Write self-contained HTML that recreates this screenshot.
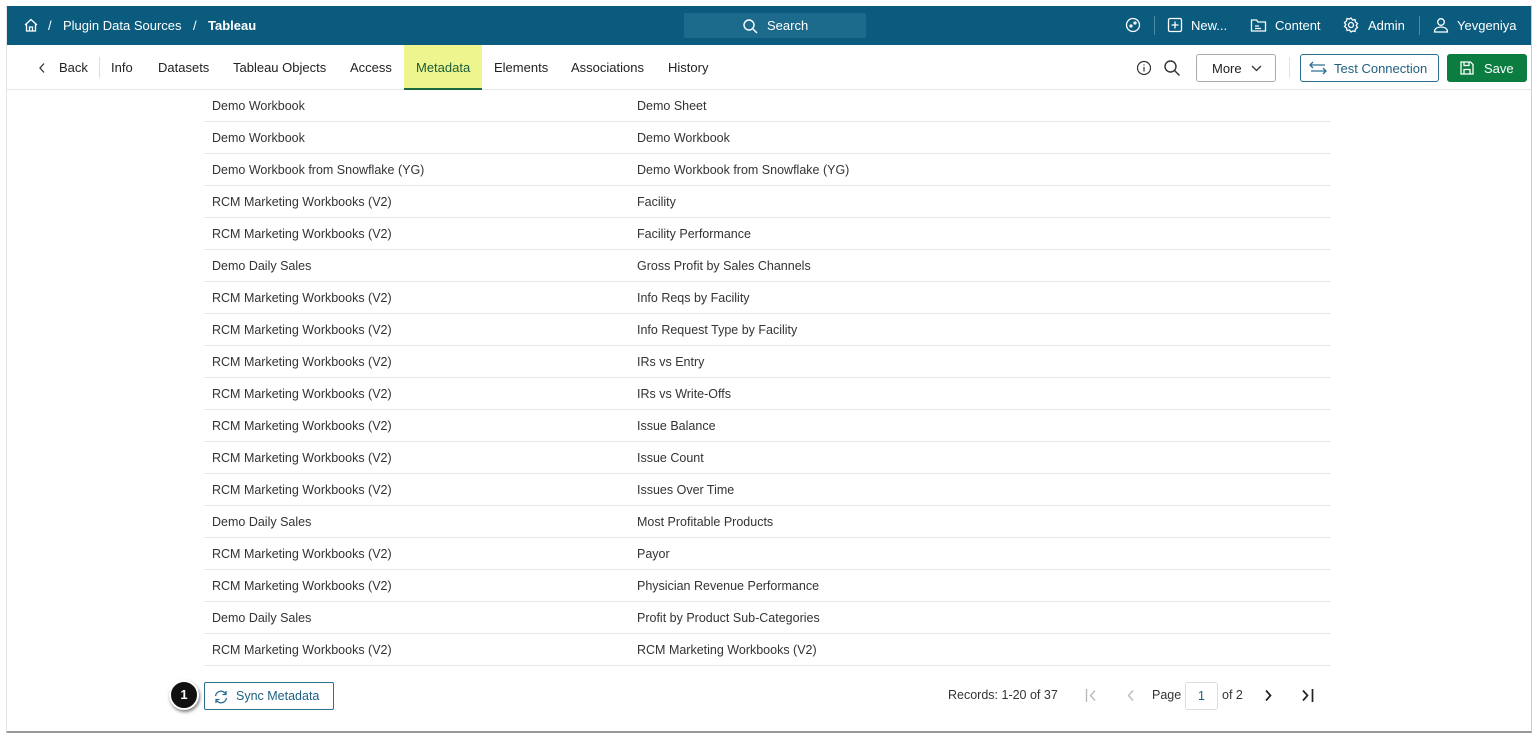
<!DOCTYPE html>
<html><head><meta charset="utf-8"><style>
*{box-sizing:border-box;margin:0;padding:0}
body{width:1538px;height:735px;background:#fff;font-family:"Liberation Sans",sans-serif;font-size:13px;color:#333;position:relative;overflow:hidden}
.frame{position:absolute;left:6px;top:5px;width:1526px;height:728px;border-right:1px solid #ccc;border-bottom:2px solid #999;border-left:1px solid #e5e5e5}
.hdr{position:absolute;left:7px;top:6px;width:1524px;height:39px;background:#0a5b7e;color:#fff}
.hdr span{position:absolute;top:12px;font-size:13px}
.search{position:absolute;left:677px;top:7px;width:182px;height:25px;background:#1d6b8c;border-radius:2px}
.nav{position:absolute;left:7px;top:45px;width:1524px;height:45px;border-bottom:1px solid #e6e6e6}
.nav span{position:absolute;top:15px;font-size:13px;color:#222}
.meta{position:absolute;left:397px;top:0;width:78px;height:45px;background:#eef58f;border-bottom:2px solid #1a6b3e}
.btn{position:absolute;top:9px;height:28px;border:1px solid #aaa;border-radius:3px;font-size:13px}
.nav .btn span{top:6px}
.row{position:absolute;left:204px;width:1127px;height:32px;border-bottom:1px solid #e8e8e8;font-size:12.5px;color:#333}
.row span{position:absolute;top:9px}
</style></head><body>
<div class="frame"></div>
<div class="hdr">
<svg style="position:absolute;left:16px;top:11px" width="16" height="16" viewBox="0 0 16 16" fill="none" stroke="#fff" stroke-width="1.3"><path d="M2 8L8 2.5 14 8M3.5 7v7h9V7M6.5 14v-4h3v4"/></svg>
<span style="left:41px">/</span><span style="left:56px">Plugin Data Sources</span><span style="left:186px">/</span><span style="left:201px;font-weight:bold">Tableau</span>
<div class="search"><svg style="position:absolute;left:58px;top:5px" width="16" height="16" viewBox="0 0 16 16" fill="none" stroke="#fff" stroke-width="1.4"><circle cx="7" cy="7" r="5"/><path d="M11 11l4 4"/></svg><span style="left:83px;top:5px">Search</span></div>
<svg style="position:absolute;left:1118px;top:11px" width="16" height="16" viewBox="0 0 16 16" fill="none" stroke="#fff" stroke-width="1.3"><circle cx="8" cy="8" r="6.5"/><circle cx="6" cy="9" r="1"/><circle cx="10" cy="6" r="1"/></svg>
<div style="position:absolute;left:1147px;top:10px;width:1px;height:19px;background:#4d8aa6"></div>
<svg style="position:absolute;left:1160px;top:11px" width="16" height="16" viewBox="0 0 16 16" fill="none" stroke="#fff" stroke-width="1.3"><rect x="1.5" y="1.5" width="13" height="13" rx="1.5"/><path d="M8 4.5v7M4.5 8h7"/></svg>
<span style="left:1184px">New...</span>
<svg style="position:absolute;left:1243px;top:11px" width="17" height="16" viewBox="0 0 17 16" fill="none" stroke="#fff" stroke-width="1.3"><path d="M1.5 3h5l1.5 2h7.5v9h-14zM5 9h4M5 11.5h6"/></svg>
<span style="left:1268px">Content</span>
<svg style="position:absolute;left:1336px;top:11px" width="16" height="16" viewBox="0 0 16 16" fill="none" stroke="#fff" stroke-width="1.3"><circle cx="8" cy="8" r="2.5"/><path d="M8 1l1.5 2 2.5-.5.5 2.5 2 1.5-1.3 2 1.3 2-2 1.5-.5 2.5-2.5-.5L8 15l-1.5-2-2.5.5-.5-2.5-2-1.5 1.3-2-1.3-2 2-1.5.5-2.5 2.5.5z"/></svg>
<span style="left:1361px">Admin</span>
<div style="position:absolute;left:1412px;top:10px;width:1px;height:19px;background:#4d8aa6"></div>
<svg style="position:absolute;left:1426px;top:11px" width="16" height="16" viewBox="0 0 16 16" fill="none" stroke="#fff" stroke-width="1.3"><circle cx="8" cy="5" r="3.3"/><path d="M1.5 15c0-3.5 3-5 6.5-5s6.5 1.5 6.5 5z"/></svg>
<span style="left:1450px">Yevgeniya</span>
</div>
<div class="nav">
<div class="meta"></div>
<svg style="position:absolute;left:31px;top:17px" width="8" height="12" viewBox="0 0 8 12" fill="none" stroke="#333" stroke-width="1.3"><path d="M6 1.5L2 6l4 4.5"/></svg>
<span style="left:52px">Back</span>
<div style="position:absolute;left:92px;top:12px;width:1px;height:21px;background:#ddd"></div>
<span style="left:104px">Info</span><span style="left:151px">Datasets</span><span style="left:226px">Tableau Objects</span><span style="left:343px">Access</span><span style="left:409px;color:#1a5c3a">Metadata</span><span style="left:487px">Elements</span><span style="left:564px">Associations</span><span style="left:661px">History</span>
<svg style="position:absolute;left:1129px;top:15px" width="16" height="16" viewBox="0 0 16 16" fill="none" stroke="#333" stroke-width="1.2"><circle cx="8" cy="8" r="6.5"/><path d="M8 7v4.5M8 4.5v1"/></svg>
<svg style="position:absolute;left:1156px;top:14px" width="18" height="18" viewBox="0 0 18 18" fill="none" stroke="#333" stroke-width="1.4"><circle cx="7.5" cy="7.5" r="5.5"/><path d="M11.5 11.5l5 5"/></svg>
<div class="btn" style="left:1189px;width:80px"><span style="left:15px">More</span><svg style="position:absolute;left:54px;top:10px" width="11" height="7" viewBox="0 0 11 7" fill="none" stroke="#333" stroke-width="1.3"><path d="M1 1l4.5 4.5L10 1"/></svg></div>
<div style="position:absolute;left:1282px;top:12px;width:1px;height:21px;background:#e2e2e2"></div>
<div class="btn" style="left:1293px;width:139px;border-color:#2a6f92"><svg style="position:absolute;left:8px;top:6px" width="18" height="14" viewBox="0 0 18 14" fill="none" stroke="#2a6f92" stroke-width="1.3"><path d="M1 4h15M4 1L1 4l3 3M17 10H2M14 7l3 3-3 3"/></svg><span style="left:33px;color:#1d5f80">Test Connection</span></div>
<div class="btn" style="left:1440px;width:80px;background:#0b7d41;border-color:#0b7d41"><svg style="position:absolute;left:11px;top:5px" width="16" height="16" viewBox="0 0 16 16" fill="none" stroke="#fff" stroke-width="1.3"><path d="M2 2h9.5L14 4.5V14H2zM5 2v3.5h5V2M5 14V9.5h6V14"/></svg><span style="left:36px;color:#fff">Save</span></div>
</div>
<div class="row" style="top:90px"><span style="left:8px">Demo Workbook</span><span style="left:433px">Demo Sheet</span></div>
<div class="row" style="top:122px"><span style="left:8px">Demo Workbook</span><span style="left:433px">Demo Workbook</span></div>
<div class="row" style="top:154px"><span style="left:8px">Demo Workbook from Snowflake (YG)</span><span style="left:433px">Demo Workbook from Snowflake (YG)</span></div>
<div class="row" style="top:186px"><span style="left:8px">RCM Marketing Workbooks (V2)</span><span style="left:433px">Facility</span></div>
<div class="row" style="top:218px"><span style="left:8px">RCM Marketing Workbooks (V2)</span><span style="left:433px">Facility Performance</span></div>
<div class="row" style="top:250px"><span style="left:8px">Demo Daily Sales</span><span style="left:433px">Gross Profit by Sales Channels</span></div>
<div class="row" style="top:282px"><span style="left:8px">RCM Marketing Workbooks (V2)</span><span style="left:433px">Info Reqs by Facility</span></div>
<div class="row" style="top:314px"><span style="left:8px">RCM Marketing Workbooks (V2)</span><span style="left:433px">Info Request Type by Facility</span></div>
<div class="row" style="top:346px"><span style="left:8px">RCM Marketing Workbooks (V2)</span><span style="left:433px">IRs vs Entry</span></div>
<div class="row" style="top:378px"><span style="left:8px">RCM Marketing Workbooks (V2)</span><span style="left:433px">IRs vs Write-Offs</span></div>
<div class="row" style="top:410px"><span style="left:8px">RCM Marketing Workbooks (V2)</span><span style="left:433px">Issue Balance</span></div>
<div class="row" style="top:442px"><span style="left:8px">RCM Marketing Workbooks (V2)</span><span style="left:433px">Issue Count</span></div>
<div class="row" style="top:474px"><span style="left:8px">RCM Marketing Workbooks (V2)</span><span style="left:433px">Issues Over Time</span></div>
<div class="row" style="top:506px"><span style="left:8px">Demo Daily Sales</span><span style="left:433px">Most Profitable Products</span></div>
<div class="row" style="top:538px"><span style="left:8px">RCM Marketing Workbooks (V2)</span><span style="left:433px">Payor</span></div>
<div class="row" style="top:570px"><span style="left:8px">RCM Marketing Workbooks (V2)</span><span style="left:433px">Physician Revenue Performance</span></div>
<div class="row" style="top:602px"><span style="left:8px">Demo Daily Sales</span><span style="left:433px">Profit by Product Sub-Categories</span></div>
<div class="row" style="top:634px"><span style="left:8px">RCM Marketing Workbooks (V2)</span><span style="left:433px">RCM Marketing Workbooks (V2)</span></div>
<div style="position:absolute;left:169px;top:680px;width:30px;height:30px;border-radius:50%;background:#111;border:2px solid #fff;box-shadow:1px 2px 3px rgba(0,0,0,.5);color:#fff;font-weight:bold;font-size:13px;text-align:center;line-height:26px">1</div>
<div style="position:absolute;left:204px;top:682px;width:130px;height:28px;border:1px solid #2a6f92;border-radius:2px;color:#1d5f80;font-size:12.5px"><svg style="position:absolute;left:8px;top:6px" width="16" height="16" viewBox="0 0 16 16" fill="none" stroke="#2a6f92" stroke-width="1.3"><path d="M2.5 7A5.5 5.5 0 0 1 13 5.5M13 2v3.5H9.5M13.5 9A5.5 5.5 0 0 1 3 10.5M3 14v-3.5h3.5"/></svg><span style="position:absolute;left:31px;top:6px">Sync Metadata</span></div>
<span style="position:absolute;left:948px;top:688px;font-size:12.5px">Records: 1-20 of 37</span>
<svg style="position:absolute;left:1085px;top:689px" width="14" height="13" viewBox="0 0 14 13" fill="none" stroke="#bbb" stroke-width="1.4"><path d="M1.5 0v13M10 1.5L5.5 6.5 10 11.5"/></svg>
<svg style="position:absolute;left:1127px;top:689px" width="8" height="13" viewBox="0 0 8 13" fill="none" stroke="#bbb" stroke-width="1.4"><path d="M6 1.5L1.5 6.5 6 11.5"/></svg>
<span style="position:absolute;left:1152px;top:688px;font-size:12.5px">Page</span>
<div style="position:absolute;left:1185px;top:682px;width:33px;height:28px;border:1px solid #ddd;border-radius:3px;color:#1d5f80;text-align:center;line-height:26px;font-size:12.5px">1</div>
<span style="position:absolute;left:1222px;top:688px;font-size:12.5px">of 2</span>
<svg style="position:absolute;left:1264px;top:689px" width="8" height="13" viewBox="0 0 8 13" fill="none" stroke="#222" stroke-width="1.7"><path d="M2 1.5l4.5 5-4.5 5"/></svg>
<svg style="position:absolute;left:1301px;top:689px" width="14" height="13" viewBox="0 0 14 13" fill="none" stroke="#222" stroke-width="1.7"><path d="M2 1.5l4.5 5-4.5 5M11.5 0v13"/></svg>
</body></html>
